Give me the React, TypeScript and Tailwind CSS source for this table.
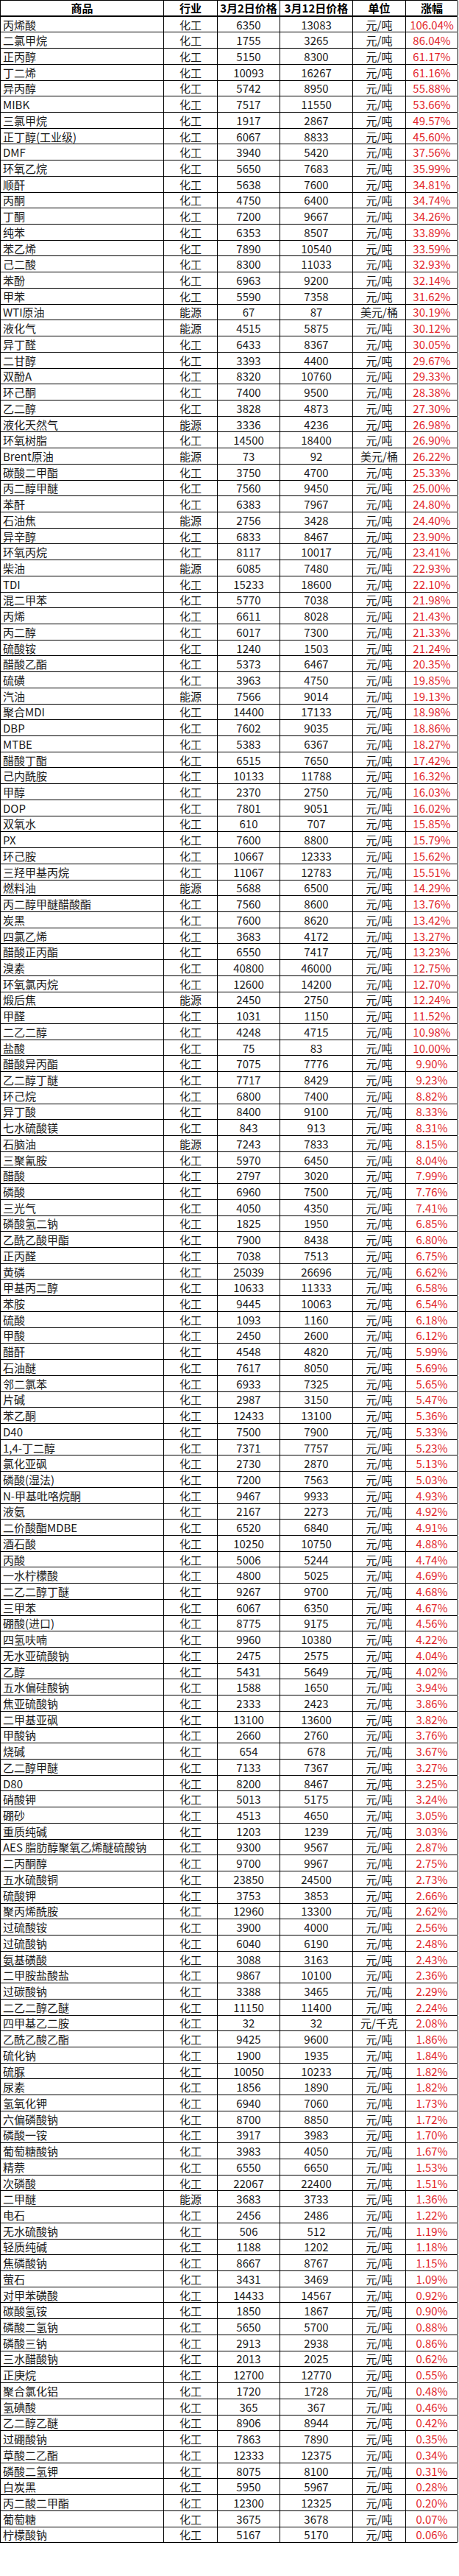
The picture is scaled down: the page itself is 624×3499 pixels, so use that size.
import React from "react";

const RAW = `丙烯酸|化工|6350|13083|元/吨|106.04%
二氯甲烷|化工|1755|3265|元/吨|86.04%
正丙醇|化工|5150|8300|元/吨|61.17%
丁二烯|化工|10093|16267|元/吨|61.16%
异丙醇|化工|5742|8950|元/吨|55.88%
MIBK|化工|7517|11550|元/吨|53.66%
三氯甲烷|化工|1917|2867|元/吨|49.57%
正丁醇(工业级)|化工|6067|8833|元/吨|45.60%
DMF|化工|3940|5420|元/吨|37.56%
环氧乙烷|化工|5650|7683|元/吨|35.99%
顺酐|化工|5638|7600|元/吨|34.81%
丙酮|化工|4750|6400|元/吨|34.74%
丁酮|化工|7200|9667|元/吨|34.26%
纯苯|化工|6353|8507|元/吨|33.89%
苯乙烯|化工|7890|10540|元/吨|33.59%
己二酸|化工|8300|11033|元/吨|32.93%
苯酚|化工|6963|9200|元/吨|32.14%
甲苯|化工|5590|7358|元/吨|31.62%
WTI原油|能源|67|87|美元/桶|30.19%
液化气|能源|4515|5875|元/吨|30.12%
异丁醛|化工|6433|8367|元/吨|30.05%
二甘醇|化工|3393|4400|元/吨|29.67%
双酚A|化工|8320|10760|元/吨|29.33%
环己酮|化工|7400|9500|元/吨|28.38%
乙二醇|化工|3828|4873|元/吨|27.30%
液化天然气|能源|3336|4236|元/吨|26.98%
环氧树脂|化工|14500|18400|元/吨|26.90%
Brent原油|能源|73|92|美元/桶|26.22%
碳酸二甲酯|化工|3750|4700|元/吨|25.33%
丙二醇甲醚|化工|7560|9450|元/吨|25.00%
苯酐|化工|6383|7967|元/吨|24.80%
石油焦|能源|2756|3428|元/吨|24.40%
异辛醇|化工|6833|8467|元/吨|23.90%
环氧丙烷|化工|8117|10017|元/吨|23.41%
柴油|能源|6085|7480|元/吨|22.93%
TDI|化工|15233|18600|元/吨|22.10%
混二甲苯|化工|5770|7038|元/吨|21.98%
丙烯|化工|6611|8028|元/吨|21.43%
丙二醇|化工|6017|7300|元/吨|21.33%
硫酸铵|化工|1240|1503|元/吨|21.24%
醋酸乙酯|化工|5373|6467|元/吨|20.35%
硫磺|化工|3963|4750|元/吨|19.85%
汽油|能源|7566|9014|元/吨|19.13%
聚合MDI|化工|14400|17133|元/吨|18.98%
DBP|化工|7602|9035|元/吨|18.86%
MTBE|化工|5383|6367|元/吨|18.27%
醋酸丁酯|化工|6515|7650|元/吨|17.42%
己内酰胺|化工|10133|11788|元/吨|16.32%
甲醇|化工|2370|2750|元/吨|16.03%
DOP|化工|7801|9051|元/吨|16.02%
双氧水|化工|610|707|元/吨|15.85%
PX|化工|7600|8800|元/吨|15.79%
环己胺|化工|10667|12333|元/吨|15.62%
三羟甲基丙烷|化工|11067|12783|元/吨|15.51%
燃料油|能源|5688|6500|元/吨|14.29%
丙二醇甲醚醋酸酯|化工|7560|8600|元/吨|13.76%
炭黑|化工|7600|8620|元/吨|13.42%
四氯乙烯|化工|3683|4172|元/吨|13.27%
醋酸正丙酯|化工|6550|7417|元/吨|13.23%
溴素|化工|40800|46000|元/吨|12.75%
环氧氯丙烷|化工|12600|14200|元/吨|12.70%
煅后焦|能源|2450|2750|元/吨|12.24%
甲醛|化工|1031|1150|元/吨|11.52%
二乙二醇|化工|4248|4715|元/吨|10.98%
盐酸|化工|75|83|元/吨|10.00%
醋酸异丙酯|化工|7075|7776|元/吨|9.90%
乙二醇丁醚|化工|7717|8429|元/吨|9.23%
环己烷|化工|6800|7400|元/吨|8.82%
异丁酸|化工|8400|9100|元/吨|8.33%
七水硫酸镁|化工|843|913|元/吨|8.31%
石脑油|能源|7243|7833|元/吨|8.15%
三聚氰胺|化工|5970|6450|元/吨|8.04%
醋酸|化工|2797|3020|元/吨|7.99%
磷酸|化工|6960|7500|元/吨|7.76%
三光气|化工|4050|4350|元/吨|7.41%
磷酸氢二钠|化工|1825|1950|元/吨|6.85%
乙酰乙酸甲酯|化工|7900|8438|元/吨|6.80%
正丙醛|化工|7038|7513|元/吨|6.75%
黄磷|化工|25039|26696|元/吨|6.62%
甲基丙二醇|化工|10633|11333|元/吨|6.58%
苯胺|化工|9445|10063|元/吨|6.54%
硫酸|化工|1093|1160|元/吨|6.18%
甲酸|化工|2450|2600|元/吨|6.12%
醋酐|化工|4548|4820|元/吨|5.99%
石油醚|化工|7617|8050|元/吨|5.69%
邻二氯苯|化工|6933|7325|元/吨|5.65%
片碱|化工|2987|3150|元/吨|5.47%
苯乙酮|化工|12433|13100|元/吨|5.36%
D40|化工|7500|7900|元/吨|5.33%
1,4-丁二醇|化工|7371|7757|元/吨|5.23%
氯化亚砜|化工|2730|2870|元/吨|5.13%
磷酸(湿法)|化工|7200|7563|元/吨|5.03%
N-甲基吡咯烷酮|化工|9467|9933|元/吨|4.93%
液氨|化工|2167|2273|元/吨|4.92%
二价酸酯MDBE|化工|6520|6840|元/吨|4.91%
酒石酸|化工|10250|10750|元/吨|4.88%
丙酸|化工|5006|5244|元/吨|4.74%
一水柠檬酸|化工|4800|5025|元/吨|4.69%
二乙二醇丁醚|化工|9267|9700|元/吨|4.68%
三甲苯|化工|6067|6350|元/吨|4.67%
硼酸(进口)|化工|8775|9175|元/吨|4.56%
四氢呋喃|化工|9960|10380|元/吨|4.22%
无水亚硫酸钠|化工|2475|2575|元/吨|4.04%
乙醇|化工|5431|5649|元/吨|4.02%
五水偏硅酸钠|化工|1588|1650|元/吨|3.94%
焦亚硫酸钠|化工|2333|2423|元/吨|3.86%
二甲基亚砜|化工|13100|13600|元/吨|3.82%
甲酸钠|化工|2660|2760|元/吨|3.76%
烧碱|化工|654|678|元/吨|3.67%
乙二醇甲醚|化工|7133|7367|元/吨|3.27%
D80|化工|8200|8467|元/吨|3.25%
硝酸钾|化工|5013|5175|元/吨|3.24%
硼砂|化工|4513|4650|元/吨|3.05%
重质纯碱|化工|1203|1239|元/吨|3.03%
AES 脂肪醇聚氧乙烯醚硫酸钠|化工|9300|9567|元/吨|2.87%
二丙酮醇|化工|9700|9967|元/吨|2.75%
五水硫酸铜|化工|23850|24500|元/吨|2.73%
硫酸钾|化工|3753|3853|元/吨|2.66%
聚丙烯酰胺|化工|12960|13300|元/吨|2.62%
过硫酸铵|化工|3900|4000|元/吨|2.56%
过硫酸钠|化工|6040|6190|元/吨|2.48%
氨基磺酸|化工|3088|3163|元/吨|2.43%
二甲胺盐酸盐|化工|9867|10100|元/吨|2.36%
过碳酸钠|化工|3388|3465|元/吨|2.29%
二乙二醇乙醚|化工|11150|11400|元/吨|2.24%
四甲基乙二胺|化工|32|32|元/千克|2.08%
乙酰乙酸乙酯|化工|9425|9600|元/吨|1.86%
硫化钠|化工|1900|1935|元/吨|1.84%
硫脲|化工|10050|10233|元/吨|1.82%
尿素|化工|1856|1890|元/吨|1.82%
氢氧化钾|化工|6940|7060|元/吨|1.73%
六偏磷酸钠|化工|8700|8850|元/吨|1.72%
磷酸一铵|化工|3917|3983|元/吨|1.70%
葡萄糖酸钠|化工|3983|4050|元/吨|1.67%
精萘|化工|6550|6650|元/吨|1.53%
次磷酸|化工|22067|22400|元/吨|1.51%
二甲醚|能源|3683|3733|元/吨|1.36%
电石|化工|2456|2486|元/吨|1.22%
无水硫酸钠|化工|506|512|元/吨|1.19%
轻质纯碱|化工|1188|1202|元/吨|1.18%
焦磷酸钠|化工|8667|8767|元/吨|1.15%
萤石|化工|3431|3469|元/吨|1.09%
对甲苯磺酸|化工|14433|14567|元/吨|0.92%
碳酸氢铵|化工|1850|1867|元/吨|0.90%
磷酸二氢钠|化工|5650|5700|元/吨|0.88%
磷酸三钠|化工|2913|2938|元/吨|0.86%
三水醋酸钠|化工|2013|2025|元/吨|0.62%
正庚烷|化工|12700|12770|元/吨|0.55%
聚合氯化铝|化工|1720|1728|元/吨|0.48%
氢碘酸|化工|365|367|元/吨|0.46%
乙二醇乙醚|化工|8906|8944|元/吨|0.42%
过硼酸钠|化工|7863|7890|元/吨|0.35%
草酸二乙酯|化工|12333|12375|元/吨|0.34%
磷酸二氢钾|化工|8075|8100|元/吨|0.31%
白炭黑|化工|5950|5967|元/吨|0.28%
丙二酸二甲酯|化工|12300|12325|元/吨|0.20%
葡萄糖|化工|3675|3678|元/吨|0.07%
柠檬酸钠|化工|5167|5170|元/吨|0.06%`;

const rows = RAW.split("\n").map((l) => l.split("|"));

const GRID = "grid grid-cols-[222px_73px_85px_99px_72px_71px]";
const FONT = { fontFamily: '"Noto Sans CJK SC", "Liberation Sans", sans-serif' };

export default function App() {
  return (
    <div className="bg-white w-[624px] min-h-[3499px]" style={FONT}>
      <div className="w-[622px] border-l border-t border-black text-[15px] leading-none text-[#1a1a1a]">
        <div className={`${GRID} h-[21.7px] border-b-2 border-black font-bold text-black`}>
          <div className="flex items-center justify-center border-r border-black">商品</div>
          <div className="flex items-center justify-center border-r border-black">行业</div>
          <div className="flex items-center justify-center border-r border-black whitespace-nowrap">3月2日价格</div>
          <div className="flex items-center justify-center border-r border-black whitespace-nowrap">3月12日价格</div>
          <div className="flex items-center justify-center border-r border-black">单位</div>
          <div className="flex items-center justify-center border-r border-black">涨幅</div>
        </div>
        {rows.map((r, i) => (
          <div key={i} className={`${GRID} h-[21.72px] border-b border-black`}>
            <div className="flex items-center px-[3px] border-r border-black whitespace-nowrap overflow-hidden">{r[0]}</div>
            <div className="flex items-center justify-center border-r border-black">{r[1]}</div>
            <div className="flex items-center justify-center border-r border-black">{r[2]}</div>
            <div className="flex items-center justify-center border-r border-black">{r[3]}</div>
            <div className="flex items-center justify-center border-r border-black whitespace-nowrap">{r[4]}</div>
            <div className="flex items-center justify-center border-r border-black text-[#e3262b]">{r[5]}</div>
          </div>
        ))}
      </div>
    </div>
  );
}
